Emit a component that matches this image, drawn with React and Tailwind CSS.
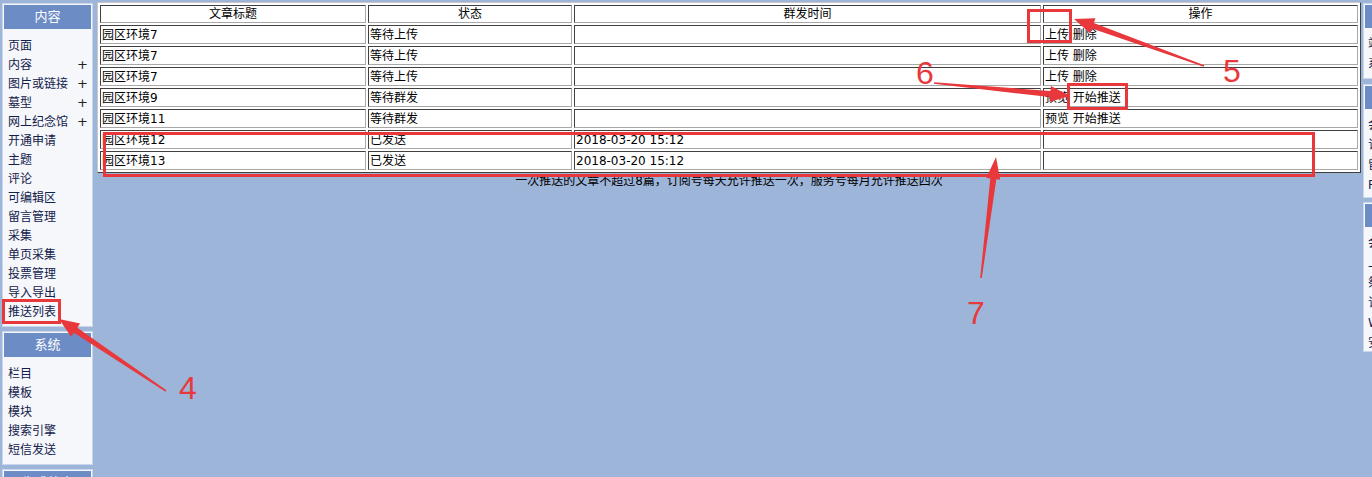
import React from "react";

const FONT = { fontFamily: '"DejaVu Sans", "Noto Sans CJK SC", sans-serif' };

function Panel({ title, items, plus = [], last = false }) {
  return (
    <div className="w-[91px] border border-[#c9d6ec] bg-[#f5f7fb] p-[1px]">
      <div className="flex h-[24px] items-center justify-center bg-[#6c8cc5] text-[13px] text-white">
        {title}
      </div>
      <div className={`pt-[7px] ${last ? "" : "pb-[4px]"}`}>
        {items.map((it, i) => (
          <div
            key={i}
            className="flex h-[19px] items-center justify-between pl-[4px] pr-[3px] text-[12px] text-[#13204a]"
          >
            <span>{it}</span>
            {plus.includes(it) && <span className="text-[13px] text-[#222]">+</span>}
          </div>
        ))}
      </div>
    </div>
  );
}

function RightPanel({ lines, h }) {
  return (
    <div className={`w-[90px] border border-[#c9d6ec] bg-[#f5f7fb] p-[1px] ${h}`}>
      <div className="h-[23px] bg-[#6c8cc5]" />
      <div className="pt-[6px]">
        {lines.map((l, i) => (
          <div key={i} className="h-[20px] pl-[3px] text-[12px] leading-[20px] text-[#13204a]">
            {l}
          </div>
        ))}
      </div>
    </div>
  );
}

const rows = [
  ["园区环境7", "等待上传", "", "上传 删除"],
  ["园区环境7", "等待上传", "", "上传 删除"],
  ["园区环境7", "等待上传", "", "上传 删除"],
  ["园区环境9", "等待群发", "", "预览 开始推送"],
  ["园区环境11", "等待群发", "", "预览 开始推送"],
  ["园区环境12", "已发送", "2018-03-20 15:12", ""],
  ["园区环境13", "已发送", "2018-03-20 15:12", ""],
];

const cellCls =
  "border border-t-[#404040] border-l-[#404040] border-b-[#a8a8a8] border-r-[#a8a8a8] bg-white px-[1px] text-[12px] text-black whitespace-nowrap overflow-hidden";

function arrowPoints(x1, y1, x2, y2, headLen = 20, headW = 8, tailW = 0.8, shaftW = 3) {
  const dx = x2 - x1;
  const dy = y2 - y1;
  const L = Math.hypot(dx, dy);
  const ux = dx / L;
  const uy = dy / L;
  const px = -uy;
  const py = ux;
  const bx = x2 - ux * headLen;
  const by = y2 - uy * headLen;
  const pts = [
    [x1 + px * tailW, y1 + py * tailW],
    [bx + px * shaftW, by + py * shaftW],
    [bx + px * headW, by + py * headW],
    [x2, y2],
    [bx - px * headW, by - py * headW],
    [bx - px * shaftW, by - py * shaftW],
    [x1 - px * tailW, y1 - py * tailW],
  ];
  return pts.map((p) => p.map((v) => v.toFixed(1)).join(",")).join(" ");
}

const RED = "#e8383c";

export default function App() {
  return (
    <div className="relative h-[477px] w-[1372px] overflow-hidden bg-[#9db5d8]" style={FONT}>
      <div className="flex">
        {/* left sidebar */}
        <div className="flex w-[95px] shrink-0 flex-col gap-[4px] pl-[2px] pt-[3px]">
          <Panel
            title="内容"
            items={[
              "页面",
              "内容",
              "图片或链接",
              "墓型",
              "网上纪念馆",
              "开通申请",
              "主题",
              "评论",
              "可编辑区",
              "留言管理",
              "采集",
              "单页采集",
              "投票管理",
              "导入导出",
              "推送列表",
            ]}
            plus={["内容", "图片或链接", "墓型", "网上纪念馆"]}
          />
          <Panel title="系统" items={["栏目", "模板", "模块", "搜索引擎", "短信发送"]} />
          <Panel title="生成静态" items={["首页"]} last />
        </div>

        {/* main */}
        <div className="w-[1266px] shrink-0 pl-[2px] pt-[2px]">
          <table className="w-[1264px] table-fixed border-separate border-spacing-[2px] border border-t-[#c8c8c8] border-l-[#c8c8c8] border-b-[#404040] border-r-[#404040] bg-white">
            <colgroup>
              <col className="w-[266px]" />
              <col className="w-[204px]" />
              <col className="w-[467px]" />
              <col className="w-[315px]" />
            </colgroup>
            <thead>
              <tr className="h-[18px]">
                {["文章标题", "状态", "群发时间", "操作"].map((h) => (
                  <th key={h} className={`${cellCls} text-center font-normal leading-[14px]`}>
                    {h}
                  </th>
                ))}
              </tr>
            </thead>
            <tbody>
              {rows.map((r, i) => (
                <tr key={i} className="h-[19px]">
                  <td className={`${cellCls} pt-[1px] leading-[15px]`}>{r[0]}</td>
                  <td className={`${cellCls} pt-[1px] leading-[15px]`}>{r[1]}</td>
                  <td className={`${cellCls} pt-[1px] leading-[15px]`}>{r[2]}</td>
                  <td className={`${cellCls} pt-[1px] leading-[15px] text-[#12306a]`}>{r[3]}</td>
                </tr>
              ))}
            </tbody>
          </table>
          <div className="text-center text-[12px] leading-[16px] text-black">
            一次推送的文章不超过8篇，订阅号每天允许推送一次，服务号每月允许推送四次
          </div>
        </div>

        {/* right cut-off sidebar */}
        <div className="flex w-[11px] shrink-0 flex-col overflow-hidden pl-[2px] pt-[3px]">
          <RightPanel h="h-[76px]" lines={["站点设置", "系统日志"]} />
          <div className="h-[5px]" />
          <RightPanel h="h-[114px]" lines={["会员列表", "订单管理", "留言回复", "Ping服务"]} />
          <div className="h-[4px]" />
          <RightPanel
            h="h-[150px]"
            lines={["会员组", "上传管理", "祭品管理", "订单统计", "Word导入", "安全设置"]}
          />
        </div>
      </div>

      {/* annotations */}
      <svg className="pointer-events-none absolute left-0 top-0" width="1372" height="477">
        <g fill="none" stroke={RED} strokeWidth="3">
          <rect x="3.5" y="300.5" width="56" height="22" />
          <rect x="1028.5" y="10.5" width="42" height="31" />
          <rect x="1068.5" y="84.5" width="58" height="24" />
          <rect x="104.5" y="133.5" width="1209" height="42" />
        </g>
        <g fill={RED}>
          <polygon points={arrowPoints(166, 391, 59, 319)} />
          <polygon points={arrowPoints(1204, 66, 1074, 19)} />
          <polygon points={arrowPoints(934, 83, 1070, 96)} />
          <polygon points={arrowPoints(981, 278, 996, 157, 22, 7, 0.8, 3)} />
        </g>
      </svg>
      {[
        ["4", "left-[179px] top-[370px]"],
        ["5", "left-[1223px] top-[53px]"],
        ["6", "left-[916px] top-[55px]"],
        ["7", "left-[967px] top-[295px]"],
      ].map(([t, pos]) => (
        <span
          key={t}
          className={`absolute ${pos} text-[32px] leading-[36px] text-[#e8383c]`}
          style={{ fontFamily: '"Liberation Sans", Arial, sans-serif' }}
        >
          {t}
        </span>
      ))}
    </div>
  );
}
